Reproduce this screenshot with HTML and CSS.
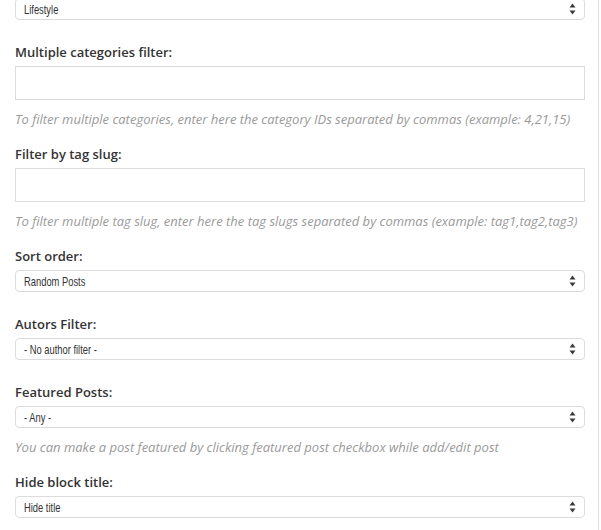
FILE: index.html
```html
<!DOCTYPE html>
<html>
<head>
<meta charset="utf-8">
<link rel="stylesheet" href="styles.css">
</head>
<body>
<div class="panel">
  <div class="field field-first">
    <div class="select"><span class="value">Lifestyle</span><svg class="arrows" width="7" height="12" viewBox="0 0 7 12"><path d="M3.5 0.5 L6.5 4.5 L0.5 4.5 Z M3.5 11.5 L6.5 7.5 L0.5 7.5 Z" fill="#3a3a3a"/></svg></div>
  </div>
  <div class="field">
    <div class="label">Multiple categories filter:</div>
    <div class="input"></div>
    <div class="help">To filter multiple categories, enter here the category IDs separated by commas (example: 4,21,15)</div>
  </div>
  <div class="field">
    <div class="label">Filter by tag slug:</div>
    <div class="input"></div>
    <div class="help">To filter multiple tag slug, enter here the tag slugs separated by commas (example: tag1,tag2,tag3)</div>
  </div>
  <div class="field">
    <div class="label">Sort order:</div>
    <div class="select"><span class="value">Random Posts</span><svg class="arrows" width="7" height="12" viewBox="0 0 7 12"><path d="M3.5 0.5 L6.5 4.5 L0.5 4.5 Z M3.5 11.5 L6.5 7.5 L0.5 7.5 Z" fill="#3a3a3a"/></svg></div>
  </div>
  <div class="field">
    <div class="label">Autors Filter:</div>
    <div class="select"><span class="value">- No author filter -</span><svg class="arrows" width="7" height="12" viewBox="0 0 7 12"><path d="M3.5 0.5 L6.5 4.5 L0.5 4.5 Z M3.5 11.5 L6.5 7.5 L0.5 7.5 Z" fill="#3a3a3a"/></svg></div>
  </div>
  <div class="field">
    <div class="label">Featured Posts:</div>
    <div class="select"><span class="value">- Any -</span><svg class="arrows" width="7" height="12" viewBox="0 0 7 12"><path d="M3.5 0.5 L6.5 4.5 L0.5 4.5 Z M3.5 11.5 L6.5 7.5 L0.5 7.5 Z" fill="#3a3a3a"/></svg></div>
    <div class="help">You can make a post featured by clicking featured post checkbox while add/edit post</div>
  </div>
  <div class="field">
    <div class="label">Hide block title:</div>
    <div class="select"><span class="value">Hide title</span><svg class="arrows" width="7" height="12" viewBox="0 0 7 12"><path d="M3.5 0.5 L6.5 4.5 L0.5 4.5 Z M3.5 11.5 L6.5 7.5 L0.5 7.5 Z" fill="#3a3a3a"/></svg></div>
  </div>
</div>
</body>
</html>
```

FILE: styles.css
```css
html, body {
  margin: 0;
  padding: 0;
  background: #fff;
  overflow: hidden;
}
.panel {
  box-sizing: border-box;
  width: 599px;
  height: 540px;
  margin-top: -2px;
  padding: 0 13px 0 15px;
  border-right: 1px solid #dcdcdc;
  font-family: "Open Sans", "Liberation Sans", sans-serif;
  color: #333;
}
.field {
  display: flex;
  flex-direction: column;
  margin-bottom: 23px;
}
.label {
  font-size: 13px;
  font-weight: 600;
  line-height: 18px;
  margin-bottom: 5px;
  color: #333;
}
.input {
  box-sizing: border-box;
  height: 34px;
  border: 1px solid #dcdcdc;
  background: #fff;
}
.select {
  box-sizing: border-box;
  height: 22px;
  border: 1px solid #dcdcdc;
  border-radius: 4px;
  background: #fff;
  display: flex;
  align-items: center;
  justify-content: space-between;
  padding: 0 8px 0 8px;
  font-family: "Liberation Sans", sans-serif;
  font-size: 13px;
  color: #333;
}
.value {
  display: inline-block;
  transform: scaleX(0.72);
  transform-origin: left center;
  white-space: nowrap;
}
.arrows {
  display: block;
}
.help {
  font-size: 13px;
  font-style: italic;
  line-height: 18px;
  margin-top: 10px;
  margin-bottom: -6px;
  color: #9a9a9a;
}
```
